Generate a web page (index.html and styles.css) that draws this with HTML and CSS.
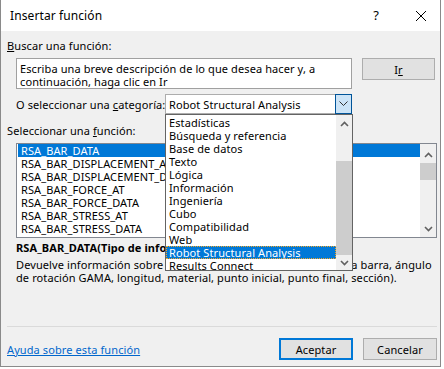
FILE: index.html
```html
<!DOCTYPE html>
<html lang="es">
<head>
  <meta charset="UTF-8" />
  <title>Insertar función</title>
  <link rel="stylesheet" href="styles.css">
</head>
<body>
  <div class="dialog">
    <div class="titlebar">
      <span class="title">Insertar función</span>
      <span class="help">?</span>
      <svg class="close" width="12" height="12" viewBox="0 0 12 12">
        <path d="M1 1 L11 11 M11 1 L1 11" stroke="#000" stroke-width="1" fill="none" />
      </svg>
    </div>

    <div class="content">
      <div class="label"><u>B</u>uscar una función:</div>
      <div class="search-row">
        <div class="search-box">Escriba una breve descripción de lo que desea hacer y, a continuación, haga clic en Ir</div>
        <button class="btn go">I<u>r</u></button>
      </div>

      <div class="category-row">
        <span class="category-label">O seleccionar una <u>c</u>ategoría:</span>
        <div class="combo">
          <span class="combo-text">Robot Structural Analysis</span>
          <span class="combo-btn">
            <svg width="9" height="6" viewBox="0 0 9 6"><path d="M0.5 0.5 L4.5 4.5 L8.5 0.5" stroke="#333" stroke-width="1" fill="none" /></svg>
          </span>
        </div>
      </div>

      <div class="label select-label">Seleccionar una <u>f</u>unción:</div>
      <div class="func-list">
        <ul class="items">
          <li class="selected">RSA_BAR_DATA</li>
          <li>RSA_BAR_DISPLACEMENT_AT</li>
          <li>RSA_BAR_DISPLACEMENT_DATA</li>
          <li>RSA_BAR_FORCE_AT</li>
          <li>RSA_BAR_FORCE_DATA</li>
          <li>RSA_BAR_STRESS_AT</li>
          <li>RSA_BAR_STRESS_DATA</li>
        </ul>
        <div class="scrollbar">
          <svg class="arrow" width="9" height="6" viewBox="0 0 9 6"><path d="M1 5 L4.5 1.5 L8 5" stroke="#606060" stroke-width="1.6" fill="none" /></svg>
          <div class="track"><div class="thumb func-thumb"></div></div>
          <svg class="arrow" width="9" height="6" viewBox="0 0 9 6"><path d="M1 1 L4.5 4.5 L8 1" stroke="#606060" stroke-width="1.6" fill="none" /></svg>
        </div>
      </div>

      <div class="syntax">RSA_BAR_DATA(Tipo de información;Número de barra)</div>
      <p class="desc">Devuelve información sobre una barra (número, id, nombre de la barra, ángulo de rotación GAMA, longitud, material, punto inicial, punto final, sección).</p>

      <div class="footer">
        <a href="#" class="help-link">Ayuda sobre esta función</a>
        <button class="btn default">Aceptar</button>
        <button class="btn">Cancelar</button>
      </div>
    </div>

    <!-- open category dropdown -->
    <div class="dropdown">
      <ul class="items">
        <li>Estadísticas</li>
        <li>Búsqueda y referencia</li>
        <li>Base de datos</li>
        <li>Texto</li>
        <li>Lógica</li>
        <li>Información</li>
        <li>Ingeniería</li>
        <li>Cubo</li>
        <li>Compatibilidad</li>
        <li>Web</li>
        <li class="selected focus">Robot Structural Analysis</li>
        <li>Results Connect</li>
      </ul>
      <div class="scrollbar">
        <svg class="arrow" width="9" height="6" viewBox="0 0 9 6"><path d="M1 5 L4.5 1.5 L8 5" stroke="#606060" stroke-width="1.6" fill="none" /></svg>
        <div class="track"><div class="thumb drop-thumb"></div></div>
        <svg class="arrow" width="9" height="6" viewBox="0 0 9 6"><path d="M1 1 L4.5 4.5 L8 1" stroke="#606060" stroke-width="1.6" fill="none" /></svg>
      </div>
    </div>
  </div>
</body>
</html>
```

FILE: styles.css
```css
body {
  font-family: "Noto Sans", "Open Sans", sans-serif;
  font-size: 11px;
  line-height: 13px;
  letter-spacing: 0.1px;
  color: #000;
  background: #fff;
  margin: 0;
  padding: 0;
}

u {
  text-decoration-thickness: 1px;
  text-underline-offset: 1px;
}

.dialog {
  position: relative;
  width: 441px;
  height: 367px;
  box-sizing: border-box;
  border: 1px solid #8a8a8a;
  border-top: none;
  background: #f0f0f0;
}

.titlebar {
  height: 31px;
  background: #fff;
  display: flex;
  align-items: center;
}

.title {
  font-size: 12px;
  padding-left: 9px;
  flex: 1;
}

.help {
  font-size: 13px;
  margin-right: 36px;
}

.close {
  margin-right: 13px;
}

.content {
  padding: 0 3px 0 6px;
}

.label {
  margin-top: 8px;
}

.search-row {
  display: flex;
  gap: 10px;
  margin: 6px 0 0 9px;
  align-items: flex-start;
}

.search-box {
  width: 336px;
  height: 31px;
  box-sizing: border-box;
  background: #fff;
  border: 1px solid #a0a0a0;
  padding: 3px 3px;
}

.btn {
  font-family: inherit;
  font-size: 11px;
  letter-spacing: 0.1px;
  color: #000;
  width: 74px;
  height: 22px;
  background: #e1e1e1;
  border: 1px solid #adadad;
  padding: 0;
}

.go {
  width: 73px;
}

.category-row {
  display: flex;
  align-items: center;
  margin: 5px 0 0 9px;
}

.category-label {
  width: 149px;
  white-space: nowrap;
}

.combo {
  display: flex;
  width: 187px;
  height: 20px;
  box-sizing: border-box;
  background: #fff;
  border: 1px solid #adadad;
  border-right: none;
}

.combo-text {
  flex: 1;
  padding: 3px 0 0 3px;
}

.combo-btn {
  width: 17px;
  box-sizing: border-box;
  margin-top: -1px;
  height: 20px;
  background: #cce4f7;
  border: 1px solid #005499;
  display: flex;
  align-items: center;
  justify-content: center;
}

.select-label {
  margin-top: 10px;
}

.func-list {
  display: flex;
  margin: 6px 0 0 9px;
  height: 95px;
  box-sizing: border-box;
  background: #fff;
  border: 1px solid #828790;
}

.items {
  list-style: none;
  margin: 0;
  padding: 0 0 0 1px;
  flex: 1;
  overflow: hidden;
}

.items li {
  height: 13px;
  padding-left: 3px;
  white-space: nowrap;
}

.items li.selected {
  background: #0078d7;
  color: #fff;
}

.scrollbar {
  width: 16px;
  background: #f0f0f0;
  display: flex;
  flex-direction: column;
  align-items: center;
}

.arrow {
  margin: 8px 0 5px;
}

.track {
  flex: 1;
  width: 100%;
  position: relative;
}

.thumb {
  position: absolute;
  left: 0;
  right: 0;
  background: #cdcdcd;
}

.func-thumb {
  top: 0;
  height: 17px;
}

.syntax {
  font-weight: bold;
  margin: 3px 0 0 9px;
  white-space: nowrap;
  overflow: hidden;
}

.desc {
  margin: 4px 0 0 9px;
}

.footer {
  display: flex;
  align-items: center;
  gap: 10px;
  border-top: 1px solid #dadada;
  margin-top: 42px;
  padding-top: 11px;
}

.help-link {
  color: #0066cc;
  flex: 1;
}

.default {
  border: 2px solid #0078d7;
}

.dropdown {
  position: absolute;
  left: 164px;
  top: 114px;
  width: 188px;
  height: 157px;
  box-sizing: border-box;
  display: flex;
  background: #fff;
  border: 1px solid #646464;
}

.dropdown .items {
  padding: 1px 0 0 0;
}

.dropdown .items li {
  padding-left: 3px;
}

.dropdown .items li.focus {
  outline: 1px dotted #f5a623;
  outline-offset: -1px;
}

.dropdown .arrow {
  margin: 6px 0 4px;
}

.drop-thumb {
  top: 30px;
  height: 94px;
}
```
